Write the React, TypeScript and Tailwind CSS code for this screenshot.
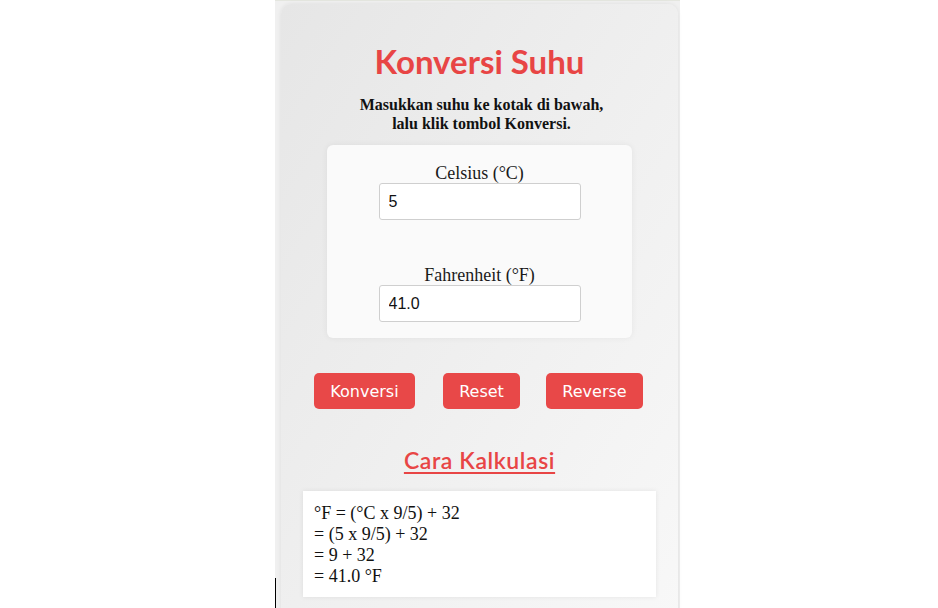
export default function App() {
  const serif = { fontFamily: '"Liberation Serif", "DejaVu Serif", serif' };
  return (
    <div className="h-[608px] w-[938px] overflow-hidden bg-white">
      <div className="relative ml-[275px] h-[608px] w-[405px] border-t border-[#e4e6df] bg-[#f0f0f0] pl-[6px] pt-[3px]">
        <div className="absolute bottom-0 left-0 h-[30px] w-[1px] bg-black" />
        <div className="h-[620px] w-[397px] rounded-[10px] bg-gradient-to-br from-[#e6e6e6] via-[#efefef] to-[#f8f8f8] pt-[37px] shadow-[0_0_4px_rgba(0,0,0,0.08)]">
          <h1 className="text-center font-['Lato',sans-serif] text-[33px] font-bold leading-[40px] text-[#e84545]">
            Konversi Suhu
          </h1>
          <p
            className="mt-[14px] pl-[4px] text-center text-[16px] font-bold leading-[19px] text-[#111]"
            style={serif}
          >
            Masukkan suhu ke kotak di bawah,
            <br />
            lalu klik tombol Konversi.
          </p>

          <div className="mx-[46px] mt-[12px] flex flex-col items-center rounded-[6px] bg-[#fafafa] pb-[16px] pt-[18px] shadow-[0_0_6px_rgba(0,0,0,0.06)]">
            <label className="text-[18px] leading-[20px] text-[#1a1a1a]" style={serif}>
              Celsius (°C)
            </label>
            <input
              readOnly
              value="5"
              className="h-[37px] w-[202px] rounded-[3px] border border-[#cfcfcf] bg-white px-[9px] font-['Liberation_Sans',sans-serif] text-[16px] text-[#111] outline-none"
            />
            <label className="mt-[45px] text-[18px] leading-[20px] text-[#1a1a1a]" style={serif}>
              Fahrenheit (°F)
            </label>
            <input
              readOnly
              value="41.0"
              className="h-[37px] w-[202px] rounded-[3px] border border-[#cfcfcf] bg-white px-[9px] font-['Liberation_Sans',sans-serif] text-[16px] text-[#111] outline-none"
            />
          </div>

          <div className="mt-[35px] flex justify-center gap-[28px] pr-[2px] font-['DejaVu_Sans',sans-serif] text-[16px] text-white">
            <button className="h-[36px] w-[101px] rounded-[5px] bg-[#e84848] pt-[2px]">Konversi</button>
            <button className="h-[36px] w-[77px] rounded-[5px] bg-[#e84848] pt-[2px]">Reset</button>
            <button className="ml-[-2px] h-[36px] w-[97px] rounded-[5px] bg-[#e84848] pt-[2px]">Reverse</button>
          </div>

          <h2 className="mt-[37px] text-center font-['Lato',sans-serif] text-[23px] font-semibold leading-[28px] tracking-[0.6px] text-[#e84545] underline decoration-[1.5px] underline-offset-[3px]">
            Cara Kalkulasi
          </h2>

          <div
            className="mx-[22px] mt-[17px] bg-white px-[11px] pb-[10px] pt-[12px] text-[18px] leading-[21px] text-[#111] shadow-[0_0_5px_rgba(0,0,0,0.08)]"
            style={serif}
          >
            <div>°F = (°C x 9/5) + 32</div>
            <div>= (5 x 9/5) + 32</div>
            <div>= 9 + 32</div>
            <div>= 41.0 °F</div>
          </div>
        </div>
      </div>
    </div>
  );
}
